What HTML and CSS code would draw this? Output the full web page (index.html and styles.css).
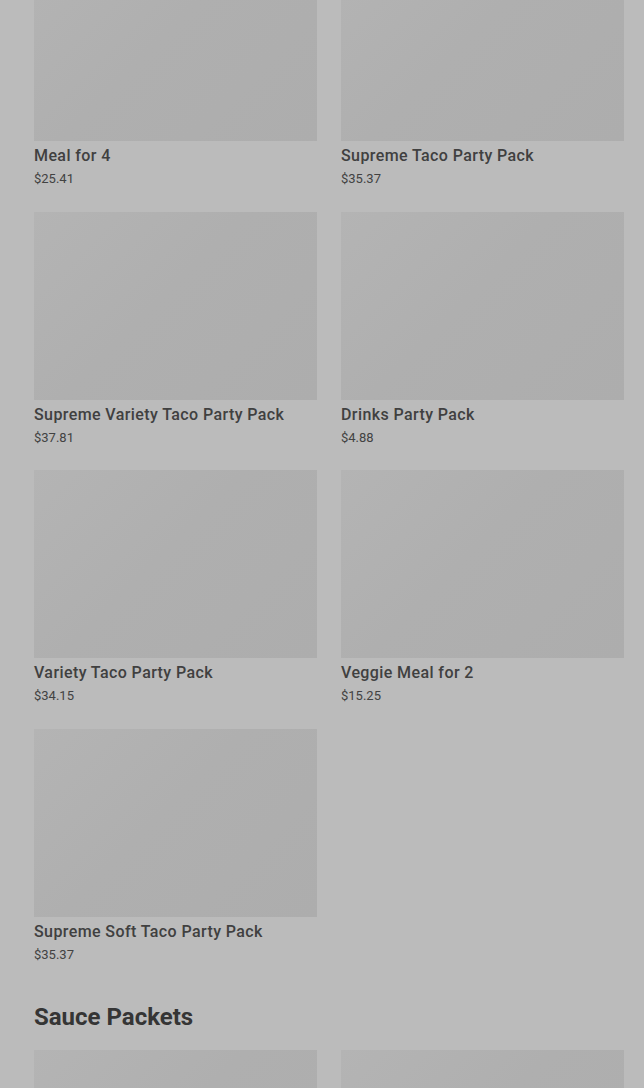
FILE: index.html
```html
<!DOCTYPE html>
<html lang="en">
<head>
    <meta charset="UTF-8">
    <meta name="viewport" content="width=device-width, initial-scale=1.0">
    <title>Party Packs</title>
    <link rel="stylesheet" href="styles.css">
</head>
<body>
    <div class="page">
        <section class="category">
            <div class="grid first">
                <div class="item">
                    <div class="thumb"></div>
                    <h3>Meal for 4</h3>
                    <p class="price">$25.41</p>
                </div>
                <div class="item">
                    <div class="thumb"></div>
                    <h3>Supreme Taco Party Pack</h3>
                    <p class="price">$35.37</p>
                </div>
                <div class="item">
                    <div class="thumb"></div>
                    <h3>Supreme Variety Taco Party Pack</h3>
                    <p class="price">$37.81</p>
                </div>
                <div class="item">
                    <div class="thumb"></div>
                    <h3>Drinks Party Pack</h3>
                    <p class="price">$4.88</p>
                </div>
                <div class="item">
                    <div class="thumb"></div>
                    <h3>Variety Taco Party Pack</h3>
                    <p class="price">$34.15</p>
                </div>
                <div class="item">
                    <div class="thumb"></div>
                    <h3>Veggie Meal for 2</h3>
                    <p class="price">$15.25</p>
                </div>
                <div class="item">
                    <div class="thumb"></div>
                    <h3>Supreme Soft Taco Party Pack</h3>
                    <p class="price">$35.37</p>
                </div>
            </div>
        </section>
        <section class="category">
            <h2>Sauce Packets</h2>
            <div class="grid">
                <div class="item">
                    <div class="thumb"></div>
                </div>
                <div class="item">
                    <div class="thumb"></div>
                </div>
            </div>
        </section>
    </div>
</body>
</html>
```

FILE: styles.css
```css
* {
    margin: 0;
    padding: 0;
    box-sizing: border-box;
}

body {
    font-family: Roboto, "Liberation Sans", sans-serif;
    background-color: #bbbbbb;
    color: #3a3a3a;
    overflow: hidden;
    height: 1088px;
}

.page {
    padding: 0 20px 0 34px;
}

.grid {
    display: grid;
    grid-template-columns: 1fr 1fr;
    column-gap: 24px;
    row-gap: 23.5px;
}

.grid.first {
    margin-top: -47px;
}

.thumb {
    height: 188px;
    background: linear-gradient(135deg, #b4b4b4 0%, #afafaf 45%, #adadad 100%);
}

.item h3 {
    font-size: 16px;
    font-weight: 500;
    line-height: 20px;
    margin-top: 5px;
    letter-spacing: 0.4px;
    color: #404040;
}

.item .price {
    font-size: 13px;
    line-height: 18px;
    margin-top: 4px;
    color: #424242;
}

.category h2 {
    font-size: 24px;
    font-weight: 700;
    color: #353535;
    margin: 38.5px 0 18px;
    line-height: 30px;
}
```
